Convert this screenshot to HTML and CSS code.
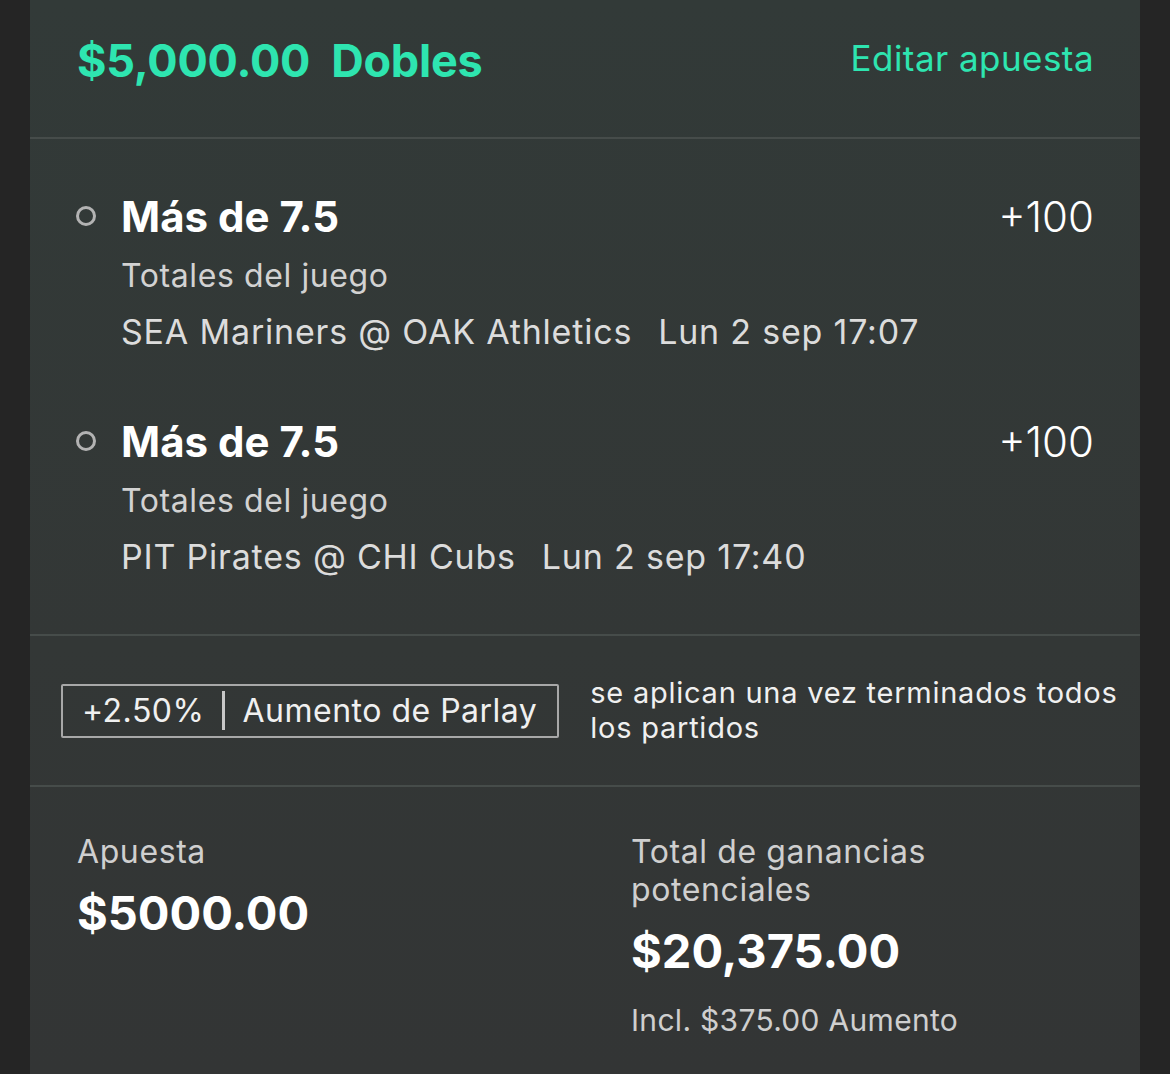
FILE: index.html
```html
<!DOCTYPE html>
<html lang="es">
<head>
    <meta charset="UTF-8">
    <meta name="viewport" content="width=device-width, initial-scale=1.0">
    <title>Boleto de apuesta</title>
    <link rel="stylesheet" href="styles.css">
</head>
<body>
    <div class="boleto">
        <div class="cabecera">
            <h1 class="titulo">$5,000.00&nbsp; Dobles</h1>
            <span class="editar">Editar apuesta</span>
        </div>

        <div class="selecciones">
            <div class="seleccion">
                <div class="fila-titulo">
                    <span class="circulo"></span>
                    <span class="mercado">Más de 7.5</span>
                    <span class="cuota">+100</span>
                </div>
                <p class="tipo">Totales del juego</p>
                <p class="partido">SEA Mariners @ OAK Athletics<span class="hora">Lun 2 sep 17:07</span></p>
            </div>
            <div class="seleccion">
                <div class="fila-titulo">
                    <span class="circulo"></span>
                    <span class="mercado">Más de 7.5</span>
                    <span class="cuota">+100</span>
                </div>
                <p class="tipo">Totales del juego</p>
                <p class="partido">PIT Pirates @ CHI Cubs<span class="hora">Lun 2 sep 17:40</span></p>
            </div>
        </div>

        <div class="aumento">
            <div class="etiqueta-aumento">
                <span>+2.50%</span>
                <span class="separador"></span>
                <span>Aumento de Parlay</span>
            </div>
            <p class="nota">se aplican una vez terminados todos<br>los partidos</p>
        </div>

        <div class="resumen">
            <div class="columna izquierda">
                <p class="rotulo">Apuesta</p>
                <p class="monto">$5000.00</p>
            </div>
            <div class="columna">
                <p class="rotulo">Total de ganancias<br>potenciales</p>
                <p class="monto grande">$20,375.00</p>
                <p class="incluye">Incl. $375.00 Aumento</p>
            </div>
        </div>
    </div>
</body>
</html>
```

FILE: styles.css
```css
* {
    margin: 0;
    padding: 0;
    box-sizing: border-box;
}

body {
    font-family: Inter, "Noto Sans", sans-serif;
    background-color: #252525;
    padding: 0 30px;
    height: 1074px;
    overflow: hidden;
    color: #ffffff;
}

.boleto {
    background: linear-gradient(180deg, #323a38 0%, #333736 60%, #333535 100%);
    min-height: 100%;
}

.cabecera {
    height: 139px;
    display: flex;
    align-items: center;
    justify-content: space-between;
    padding: 0 46px 18px 47px;
    border-bottom: 2px solid #464c4a;
}

.titulo {
    font-size: 45px;
    font-weight: 700;
    color: #2ee5b0;
    letter-spacing: -0.2px;
    margin-top: 2px;
}

.editar {
    font-size: 35px;
    color: #2ee5b0;
    letter-spacing: 0.45px;
    margin-bottom: 4px;
}

.selecciones {
    padding: 53px 46px 57px 46px;
    border-bottom: 2px solid #464c4a;
    display: flex;
    flex-direction: column;
    gap: 65px;
}

.fila-titulo {
    display: flex;
    align-items: center;
    height: 48px;
}

.circulo {
    width: 20px;
    height: 20px;
    border: 3px solid #b3b3b3;
    border-radius: 50%;
    margin-right: 25px;
}

.mercado {
    font-size: 42px;
    font-weight: 700;
    flex: 1;
}

.cuota {
    font-size: 42px;
    font-weight: 300;
}

.tipo,
.partido {
    padding-left: 45px;
    line-height: 40px;
    margin-top: 16px;
    color: #d2d2d2;
}

.tipo {
    font-size: 32px;
    letter-spacing: 0.6px;
}

.partido {
    font-size: 34px;
    letter-spacing: 0.8px;
    color: #dcdcdc;
}

.hora {
    margin-left: 26px;
}

.aumento {
    display: flex;
    align-items: center;
    padding: 38px 20px 38px 31px;
    border-bottom: 2px solid #464c4a;
    min-height: 151px;
}

.etiqueta-aumento {
    display: flex;
    align-items: center;
    white-space: nowrap;
    height: 54px;
    border: 2px solid #a8a8a8;
    border-radius: 2px;
    padding: 0 20px 0 19px;
    font-size: 32px;
    letter-spacing: 0.5px;
    color: #f0f0f0;
    margin-right: 31px;
}

.separador {
    width: 3px;
    height: 39px;
    background-color: #c8c8c8;
    margin: 0 17px 0 18px;
}

.nota {
    font-size: 29px;
    line-height: 35px;
    color: #f0f0f0;
    letter-spacing: 0.75px;
    white-space: nowrap;
    margin-bottom: 2px;
}

.resumen {
    display: flex;
    padding: 46px 47px 0 47px;
}

.columna.izquierda {
    width: 554px;
}

.rotulo {
    font-size: 32px;
    line-height: 38px;
    letter-spacing: 0.6px;
    color: #cfcfcf;
}

.monto {
    font-size: 47px;
    font-weight: 700;
    line-height: 52px;
    margin-top: 16px;
}

.monto.grande {
    font-size: 47px;
    margin-top: 16px;
}

.incluye {
    font-size: 30px;
    line-height: 38px;
    letter-spacing: 0.3px;
    color: #cfcfcf;
    margin-top: 24px;
}
```
